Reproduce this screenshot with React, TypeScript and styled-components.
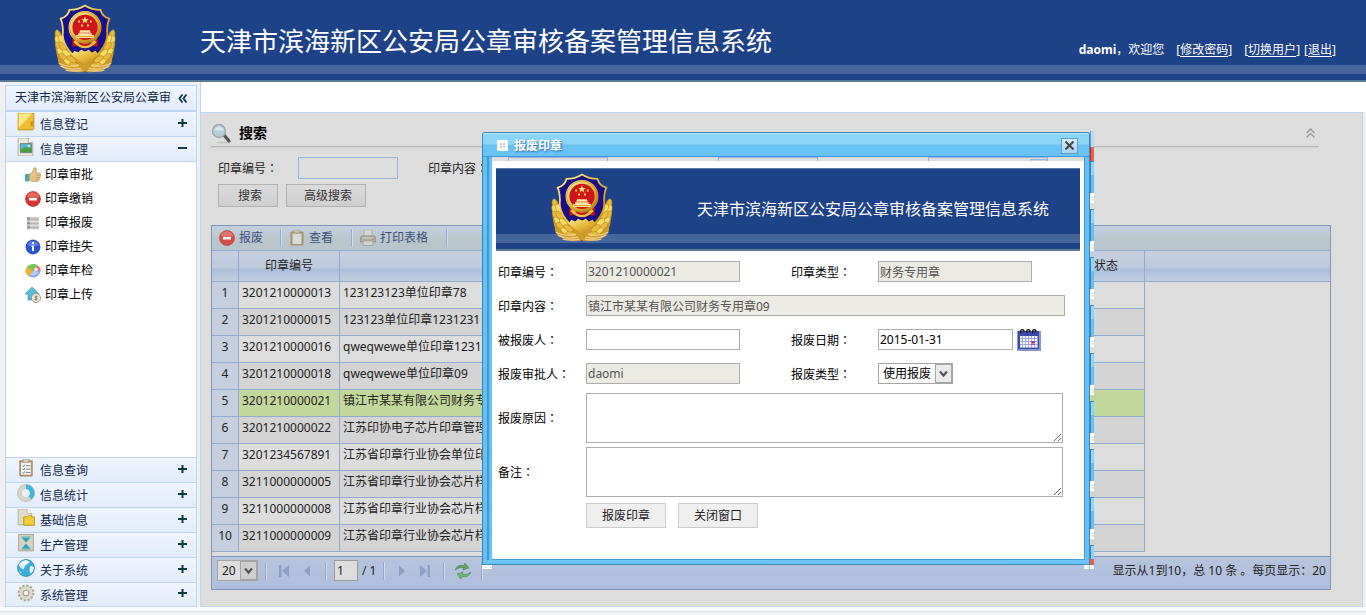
import React from "react";
import styled, { createGlobalStyle, css } from "styled-components";

const sans = `"Noto Sans", "Noto Sans CJK SC", sans-serif`;

const GlobalStyle = createGlobalStyle`
  *, *::before, *::after { box-sizing: border-box; }
  body { margin: 0; background: #f0f0f0; color: #000; font: 12px/20px ${sans}; }
  button, input, select, textarea { font: 12px/16px ${sans}; margin: 0; border-radius: 0; }
  svg { display: block; flex: none; }
`;

/* ---------- page frame ---------- */

const Page = styled.div`
  display: flex;
  flex-direction: column;
  min-height: 100vh;
`;

const brandBackground = css`
  background: linear-gradient(#1d4287 0 65px, #46659d 65px 74px, #1d4287 74px 80px, #597a94 80px 82px);
`;

const Header = styled.header`
  ${brandBackground}
  display: flex;
  height: 82px;
  padding: 4px 30px 0 53px;
  color: #fff;
`;

const SiteTitle = styled.h1`
  flex: 1;
  margin: 20px 0 0 83px;
  font-size: 26px;
  line-height: 34px;
  font-weight: 400;
  white-space: nowrap;
`;

const UserBar = styled.nav`
  display: flex;
  margin-top: 36px;
  line-height: 20px;
  white-space: nowrap;

  a { color: #fff; text-decoration: none; margin-left: 12px; }
  a:last-child { margin-left: 4px; }
  u { text-underline-offset: 2px; }
`;

const Body = styled.div`
  flex: 1;
  display: flex;
`;

const Footer = styled.footer`
  height: 8px;
  background: linear-gradient(#fff 0 4px, #dcdde0 4px 5px, #f2f3f6 5px);
`;

/* ---------- sidebar ---------- */

const Sidebar = styled.aside`
  display: flex;
  flex-direction: column;
  width: 192px;
  margin: 3px 3px 0 5px;
  border: 1px solid #bcd5f5;
  background: #fff;
`;

const SidebarTitle = styled.div`
  display: flex;
  align-items: center;
  justify-content: space-between;
  height: 26px;
  padding: 0 8px 0 9px;
  border-bottom: 2px solid #bcd5f5;
  background: linear-gradient(#f0f5fe, #e2ecfb);
  color: #12294f;
  white-space: nowrap;
`;

const Section = styled.button<{ $first?: boolean }>`
  display: flex;
  align-items: center;
  flex: none;
  width: 100%;
  height: ${p => (p.$first ? 24 : 25)}px;
  padding: 0 9px 0 11px;
  border: 0;
  border-top: ${p => (p.$first ? 0 : 1)}px solid #bcd5f5;
  background: linear-gradient(#f0f5fe, #e2ecfb);
  color: #12294f;
  text-align: left;

  &:last-child { height: 24px; }
  svg { margin-top: -2px; }
  svg:first-child { margin-top: -4px; }
  span { flex: 1; margin: 2px 0 0 5px; }
`;

const SubMenu = styled.ul`
  flex: 1;
  margin: 0;
  padding: 0;
  list-style: none;
  border-top: 1px solid #bcd5f5;
`;

const SubItem = styled.li`
  height: 24px;
  padding-left: 19px;

  a {
    display: flex;
    align-items: center;
    gap: 4px;
    height: 24px;
    padding-top: 2px;
    color: #000;
    text-decoration: none;
  }
`;

/* ---------- main area ---------- */

const Main = styled.main`
  flex: 1;
  display: flex;
  flex-direction: column;
  min-width: 0;
  border-left: 1px solid #bcd5f5;
`;

const TabStrip = styled.div`
  height: 30px;
  background: #fff;
`;

const Panel = styled.section`
  flex: 1;
  margin-right: 3px;
  padding: 9px 31px 16px 10px;
  border: solid #bcd5f5;
  border-width: 1px 1px 1px 0;
  background: #ddd;
`;

const SearchHeader = styled.div`
  display: flex;
  align-items: center;
  height: 25px;
  margin-right: 12px;
  padding: 0 3px 2px 0;
  border-bottom: 1px solid #b9b9b9;
  box-shadow: 0 1px 0 #d2d2d2;

  h2 { flex: 1; margin: 0 0 0 7px; font-size: 14px; line-height: 20px; }
`;

const SearchFields = styled.form`
  margin: 10px 0 0 7px;
`;

const SearchGrid = styled.div`
  display: grid;
  grid-template-columns: repeat(3, 80px 130px) 80px 120px;
  align-items: center;
  color: #222;
`;

const SearchInput = styled.input`
  width: 100px;
  height: 22px;
  border: 1px solid #9db3d8;
  background: #ddd;
`;

const SearchActions = styled.div`
  display: flex;
  gap: 8px;
  margin-top: 5px;
`;

const DimButton = styled.button<{ $w: number }>`
  width: ${p => p.$w}px;
  height: 23px;
  padding: 0 0 0 4px;
  border: 1px solid #b3b3b3;
  background: linear-gradient(#dadada, #cfcfcf);
  color: #333;
`;

/* ---------- data grid ---------- */

const Grid = styled.div`
  margin-top: 18px;
  border: 1px solid #7d96ba;
`;

const Toolbar = styled.div`
  display: flex;
  align-items: center;
  height: 25px;
  padding-left: 7px;
  border-bottom: 1px solid #93aacf;
  background: linear-gradient(#c4cfdf, #b9c6cb 60%, #bac5ce);
`;

const Tool = styled.button<{ $w: number }>`
  display: flex;
  align-items: center;
  gap: 4px;
  width: ${p => p.$w}px;
  height: 18px;
  margin-right: 8px;
  padding: 0;
  border: 0;
  border-right: 1px solid #86aee0;
  box-shadow: 1px 0 0 #d5dbe5;
  background: transparent;
  color: #3a5180;
  white-space: nowrap;

  svg { opacity: 0.85; }
`;

const Table = styled.table`
  width: 100%;
  table-layout: fixed;
  border-collapse: separate;
  border-spacing: 0;
`;

const Th = styled.th`
  height: 31px;
  padding: 0;
  border: solid #93aacf;
  border-width: 0 1px 1px 0;
  background: linear-gradient(#c6cfdf, #bccadd 55%, #aabfd9 62%, #c2cddf);
  color: #222;
  font-weight: 400;

  &:last-child { border-right: 0; }
`;

const Row = styled.tr<{ $tone: string }>`
  td { background: ${p => p.$tone}; }
  td:first-child { background: #c5cfe0; text-align: center; padding: 0 0 4px; }
  td:last-child { background: transparent; border: 0; }
`;

const Td = styled.td`
  height: 27px;
  padding: 0 3px 4px;
  border: solid #93aacf;
  border-width: 0 1px 1px 0;
  line-height: 20px;
  color: #222;
  overflow: hidden;
  white-space: nowrap;
`;

const Pager = styled.div`
  display: flex;
  align-items: center;
  height: 33px;
  margin-top: 4px;
  padding: 0 4px 5px 5px;
  border-top: 1px solid #7d96ba;
  background: linear-gradient(#b6c4dd, #aebfdd);
  color: #222;
`;

const Separator = styled.span`
  width: 2px;
  height: 18px;
  margin: 0 7px;
  border-left: 1px solid #93aacf;
  border-right: 1px solid #d3d9e4;
`;

const PagerButton = styled.button`
  display: flex;
  justify-content: center;
  align-items: center;
  width: 22px;
  height: 20px;
  padding: 0;
  border: 0;
  background: transparent;
`;

const PageInput = styled.input`
  width: 24px;
  height: 21px;
  margin-right: 4px;
  padding: 0 2px;
  border: 1px solid #9a9a9a;
  background: #ddd;
  color: #222;
`;

const PagerInfo = styled.span`
  margin-left: auto;
`;

const SelectBox = styled.span<{ $w: number; $dim?: boolean }>`
  display: flex;
  width: ${p => p.$w}px;
  height: 21px;
  border: 1px solid #a5a5a5;
  background: ${p => (p.$dim ? "#ddd" : "#fff")};

  select {
    flex: 1;
    width: 100%;
    margin-right: -17px;
    padding: 0 17px 0 4px;
    border: 0;
    background: transparent;
    color: inherit;
    appearance: none;
  }
  svg {
    width: 17px;
    height: 19px;
    border: 1px solid #a5a5a5;
    background: ${p => (p.$dim ? "#cfcfcf" : "#ebebeb")};
    pointer-events: none;
  }
`;

const QuerySelect = styled(SelectBox)`
  height: 22px;
  border-color: #9db3d8;

  svg { margin-top: 1px; border-color: #9db3d8; background: #c9d3e2; }
`;

/* ---------- dialog ---------- */

const Dialog = styled.div`
  position: absolute;
  left: 482px;
  top: 132px;
  width: 608px;
  border: 1px solid #3c87b5;
  border-bottom-color: #3f88b4;
  border-radius: 3px 3px 0 0;
`;

const DialogTitle = styled.div`
  display: flex;
  align-items: center;
  height: 24px;
  padding: 2px 11px 0 14px;
  border-bottom: 1px solid #3d9bdc;
  border-radius: 2px 2px 0 0;
  background: linear-gradient(#b7e7fb 0 1px, #8ad5f8 1px 11px, #69c2f4 12px);
  color: #fff;

  h2 {
    flex: 1;
    margin: 0 0 0 6px;
    font-size: 12px;
    line-height: 20px;
    text-shadow: 1px 1px 2px #2d6d9c;
  }
`;

const CloseButton = styled.button`
  display: flex;
  align-items: center;
  justify-content: center;
  width: 17px;
  height: 16px;
  padding: 0;
  border: 1px solid #5f9ed0;
  background: linear-gradient(#d9ecfa, #a9d0f0);
`;

const DialogFrame = styled.div`
  display: flex;
  border-bottom: 4px solid #6ac4f5;
  box-shadow: inset 0 -1px 0 #3c9bdc;
`;

const LeftEdge = styled.div`
  width: 9px;
  background: linear-gradient(90deg, #65c1f5 0 4px, #3f97d8 4px 6px, #65c1f5 6px 9px);
`;

const RightEdge = styled.div`
  width: 5px;
  border-left: 1px solid #3f97d8;
  background: #65c1f5;
`;

const DialogBody = styled.div`
  flex: 1;
  min-width: 0;
  margin: 4px 0 1px;
  padding: 7px 4px 31px;
  background: #fff;
`;

const Banner = styled.div`
  display: flex;
  height: 83px;
  padding: 5px 30px 0 54px;
  color: #fff;
  background: linear-gradient(#5d7fa6 0 1px, #1d4287 1px 66px, #46659d 66px 75px, #1d4287 75px 81px, #597a94 81px);

  p {
    margin: 26px 0 0 83px;
    font-size: 16px;
    line-height: 20px;
    white-space: nowrap;
  }
`;

const Form = styled.form`
  display: flex;
  flex-direction: column;
  gap: 4px;
  padding: 10px 2px 0;
`;

const FieldGrid = styled.div`
  display: grid;
  grid-template-columns: 88px 205px 87px 1fr;
  grid-auto-rows: 21px;
  row-gap: 13px;
  align-items: center;
  margin-bottom: 5px;
`;

const Label = styled.label`
  font-family: "Noto Sans CJK TC", sans-serif;
  white-space: nowrap;
`;

const field = css`
  border: 1px solid #abadb3;
  background: #fff;
  color: #000;
  &:disabled { border-color: #acacac; background: #ebebe4; color: #545454; opacity: 1; }
`;

const TextInput = styled.input<{ $w?: number }>`
  ${field}
  width: ${p => p.$w ?? 154}px;
  height: 21px;
  padding: 0 1px;
`;

const WideCell = styled.div`
  grid-column: span 3;
  display: flex;
`;

const DateCell = styled.div`
  display: flex;
  align-items: center;
  gap: 4px;
`;

const AreaRow = styled.div`
  display: flex;
  align-items: center;

  label { width: 88px; }
`;

const TextArea = styled.textarea`
  ${field}
  width: 477px;
  height: 50px;
  padding: 2px;
`;

const Actions = styled.div`
  display: flex;
  gap: 12px;
  margin: 2px 0 0 88px;
`;

const ActionButton = styled.button`
  width: 80px;
  height: 25px;
  padding: 0;
  border: 1px solid #ccc;
  background: #efefef;
  color: #222;
`;

/* Sprite tiles that repeat along the right side and under the dialog. */
const ShadowStrip = styled.div`
  position: absolute;
  left: 1090px;
  top: 131px;
  width: 4px;
  height: 438px;
  overflow: hidden;
`;

const ShadowFoot = styled.div<{ $x: number; $w: number }>`
  position: absolute;
  left: ${p => p.$x}px;
  top: 565px;
  width: ${p => p.$w}px;
  height: 4px;
  background: repeating-linear-gradient(90deg, transparent 0 3px, #d5d8da 3px 5px) 0 2px / 100% 1px no-repeat, #fff;
`;

/* ---------- drawings ---------- */

const LEAVES = [
  [4, 31, 78], [4, 37, 70], [5, 43, 62], [7, 49, 52], [10, 54, 42],
  [15, 59, 30], [21, 62, 18], [8, 36, 62], [9, 43, 55], [13, 50, 45], [18, 56, 34],
];

function Emblem() {
  const id = React.useId();
  return (
    <svg width="64" height="70" viewBox="-1 0 66 70" aria-hidden="true">
      <defs>
        <linearGradient id={id} x1="0" y1="0" x2="1" y2="1">
          <stop offset="0" stopColor="#fff0a0" />
          <stop offset=".5" stopColor="#e8b93a" />
          <stop offset="1" stopColor="#b87d16" />
        </linearGradient>
      </defs>
      <path d="M4 56 Q14 53 32 58 Q50 53 60 56 Q60 65 46 68 Q36 70.500 32 68 Q28 70.500 18 68 Q4 65 4 56Z" fill="#cf9a3c" />
      {[false, true].map(flip => (
        <g key={String(flip)} transform={flip ? "translate(64 0) scale(-1 1)" : undefined}>
          <path d="M6 27 L2 30 L1 40 L3 52 L6 62 L32 67 L30 56 L12 40Z" fill="#cc9b28" />
          {LEAVES.map(([x, y, r], i) => (
            <ellipse key={i} cx={x} cy={y} rx="5.500" ry="2.700" fill={i % 2 ? "#f8dc62" : "#e9bb3c"} stroke="#b07d1c" strokeWidth=".5" transform={`rotate(${r} ${x} ${y})`} />
          ))}
          <path d="M5 60 Q14 65 26 62 M7 63 Q16 68 28 65 M12 67 Q20 69 29 67" stroke="#f3cf84" strokeWidth="1.300" fill="none" />
        </g>
      ))}
      <path d="M32 .5 Q39 5 48 5 Q50 12 57 14 Q54 22 55 31 Q54 47 32 61 Q10 47 9 31 Q10 22 7 14 Q14 12 16 5 Q25 5 32 .5Z" fill="#1a0f86" stroke={`url(#${id})`} strokeWidth="1.800" />
      <path d="M15 48 L19 50 L21 47 L25 49 L28 46 L32 48 L36 46 L39 49 L43 47 L45 50 L49 48 Q42 56 32 61 Q22 56 15 48Z" fill={`url(#${id})`} />
      <path d="M19 35 L19 43 L25 42 L32 44 L39 42 L45 43 L45 35Z" fill="#c9131b" />
      <path d="M21 37 Q32 49 43 37" fill="none" stroke="#efc23e" strokeWidth="3" />
      <circle cx="32" cy="23" r="15" fill="#d0141b" stroke={`url(#${id})`} strokeWidth="4" />
      <circle cx="32" cy="23" r="16" fill="none" stroke="#a8751a" strokeWidth=".5" />
      <path d="M32 11.500 L33 14.400 H36 L33.600 16.200 L34.500 19 L32 17.300 L29.500 19 L30.400 16.200 L28 14.400 H31Z" fill="#ffe67a" />
      <path d="M25 16h2v2h-2zM37 16h2v2h-2zM28 20h2v2h-2zM34 20h2v2h-2z" fill="#ffd95c" />
      <path d="M27 26 H37 L38 28.500 H26Z M25 29 H39 V31 H41 V34 H23 V31 H25Z" fill="#f8e8a2" />
      <path d="M24 32.500 H40" stroke="#d59922" />
      <path d="M26 39 Q32 44 38 39" fill="none" stroke="#c9131b" strokeWidth="1.600" />
    </svg>
  );
}

type Art = { size?: number; children: React.ReactNode };
const Draw = ({ size = 16, children }: Art) => (
  <svg width={size} height={size} viewBox="0 0 16 16" aria-hidden="true">{children}</svg>
);

const icons: Record<string, React.ReactNode> = {
  book: <><path d="M1 0h14v14l-1 1H1z" fill="#efbe31" stroke="#b98712" strokeWidth=".7" /><path d="M1.500 .5h12L1.500 13z" fill="#ffe985" /><path d="M12 8l2-1v5l-2-1z" fill="#c98b0a" /></>,
  picture: <><path d="M1 0h9l4 4v12H1z" fill="#eceadd" stroke="#a9a590" strokeWidth=".7" /><path d="M10 0v4h4" fill="#fff" stroke="#a9a590" strokeWidth=".7" /><path d="M3 5h10v8H3z" fill="#55b8e3" stroke="#657c60" strokeWidth=".8" /><path d="M3.500 10l4-2 5 1v3.500h-9z" fill="#48a33b" /><circle cx="10.500" cy="7" r="1" fill="#fff2a0" /></>,
  checklist: <><rect x="2" y="1" width="12" height="14.500" rx="1" fill="#a98a62" /><path d="M3.500 3h9v11h-9z" fill="#f2f4f5" /><path d="M5.500 0h5v3h-5z" fill="#d5d0bd" stroke="#958a70" strokeWidth=".5" /><path d="M5 6l.8.8L7 5M5 9l.8.8L7 8M5 12l.8.8L7 11" fill="none" stroke="#278594" strokeWidth=".8" /><path d="M8 6h4M8 9h4M8 12h4" stroke="#777" strokeWidth=".8" /></>,
  donut: <><circle cx="8" cy="8" r="5.500" fill="none" stroke="#d8d5c6" strokeWidth="4" /><path d="M8 2.500a5.500 5.500 0 0 1 3.500 9.800" fill="none" stroke="#3cb7dd" strokeWidth="4" /><circle cx="8" cy="8" r="7.600" fill="none" stroke="#a2abab" strokeWidth=".5" /></>,
  folder: <><path d="M1 0h8l4 4v10H1z" fill="#dfdccb" stroke="#a9a48c" strokeWidth=".7" /><path d="M9 0v4h4" fill="#fff" stroke="#a9a48c" strokeWidth=".6" /><path d="M6 7h3l1-1h3v1h2.500v7.500H6z" fill="#f1ce32" stroke="#b48b12" strokeWidth=".7" /></>,
  hourglass: <><rect x="1.500" y=".5" width="13" height="14.500" fill="#d5d2c1" stroke="#9a967e" strokeWidth=".7" /><path d="M4 3h8L8 7.500zM4 13h8L8 8.500z" fill="#2aa7bf" /><path d="M4 2.500h8M4 13.500h8" stroke="#7db9bd" /></>,
  globe: <><circle cx="8" cy="8" r="7.500" fill="#3aaed4" stroke="#20799c" strokeWidth=".6" /><path d="M1.500 5Q4 1 9 1q2 1 1 3L7 6 6 9 3 8zM12 6l3 1q0 4-3 6l-1-3zM2 10l2 2-.5 1z" fill="#e4f4f8" /><path d="M3 3q5-4 9 0-4 1-9 0" fill="#fff" opacity=".5" /></>,
  gear: <><circle cx="8" cy="8" r="6.500" fill="#d9d6c7" stroke="#aaa691" strokeWidth="2" strokeDasharray="2 1.400" /><circle cx="8" cy="8" r="5.700" fill="#dedbce" /><circle cx="8" cy="8" r="2.500" fill="#f5f4ee" stroke="#a5a18d" /></>,
  thumb: <><path d="M0 7h4v7.500H0z" fill="#46a9ba" /><path d="M4 7l3-1L9 .8q3-.8 2.300 2.700L11 6h3.500q1.600.7.8 2.300.8 1.200-.3 2.400.4 1.300-.8 2Q14 14.500 12 14.500H8L4 13z" fill="#e5c284" stroke="#ac8344" strokeWidth=".6" /><path d="M11 8.300h4M11 10.600h4M10.500 12.700H14" stroke="#b88f4e" strokeWidth=".6" /></>,
  stop: <><circle cx="8" cy="8" r="7.500" fill="#d8372f" stroke="#a92620" strokeWidth=".6" /><path d="M1.500 6a6.800 6.800 0 0 1 13 0q-6 2-13 0" fill="#ee7a6e" opacity=".7" /><path d="M4 7h8v2.500H4z" fill="#fff" /></>,
  server: <><path d="M2 2h12v12.500H2z" fill="#c9c9c9" /><path d="M2 2h3v12.500H2z" fill="#9c9c9c" /><path d="M2 6h12M2 10h12M2 14h12" stroke="#fff" /><path d="M2 5h12M2 9h12M2 13h12" stroke="#8a8a8a" strokeWidth=".6" /></>,
  info: <><circle cx="8" cy="8" r="7" fill="#2b55d1" stroke="#1d3d9c" strokeWidth=".8" /><path d="M2 6q6-8 12 0-6 2-12 0" fill="#6d93f1" opacity=".7" /><path d="M7 3h2v2H7zM6.500 6.500H9V12H7V8h-.5z" fill="#fff" /></>,
  pie: <><ellipse cx="8" cy="8" rx="7.500" ry="6.500" fill="#8ea4ec" /><path d="M8 8L2 3.500q3-3 8-2.500l3 2z" fill="#6fcb46" /><path d="M8 8L2 4q-4 5 2 9.500z" fill="#eab334" /><path d="M8 8l4-5.500q4 2 3.500 5z" fill="#ec6b79" /><circle cx="11" cy="6.500" r="2" fill="#f9dfe2" /><path d="M5 12l3-4 6 1q-3 5-9 3z" fill="#bac9f6" /></>,
  upload: <><path d="M7 0L0 7h3v6h8V7h3z" fill="#55bfd8" stroke="#2a8ea9" strokeWidth=".6" /><circle cx="11" cy="11" r="4.600" fill="#e7e4d4" stroke="#948f78" strokeWidth=".8" /><path d="M12.500 9.500h-2q-1.500 1 .5 1.500t.5 1.500h-2M11 8.500v5" fill="none" stroke="#777262" strokeWidth=".8" /></>,
  clipboard: <><rect x="1.500" y="1.500" width="13" height="14" rx="1" fill="#a58a5c" /><path d="M3.500 3.500h9v10.500h-9z" fill="#dfe1df" /><path d="M5 0h6v3H5z" fill="#c8c2aa" stroke="#897e63" strokeWidth=".5" /></>,
  printer: <><path d="M4 0h8v6H4z" fill="#dadad5" stroke="#939388" strokeWidth=".6" /><path d="M1 6h14l1 6H0z" fill="#aaa99b" stroke="#7e7c6e" strokeWidth=".6" /><path d="M2 8h12" stroke="#dedace" /><path d="M3 11h10v4.500H3z" fill="#d8d9d6" stroke="#8b8b82" strokeWidth=".6" /><path d="M12 9h2" stroke="#d35750" /></>,
  first: <><path d="M2 2h2.500v12H2z" fill="#8ea0c4" /><path d="M12 2v12L5 8z" fill="#8ea0c4" /></>,
  prev: <path d="M11 2.500v11L5 8z" fill="#8ea0c4" />,
  next: <path d="M4 2.500v11L10 8z" fill="#8ea0c4" />,
  last: <><path d="M10.500 2H13v12h-2.500z" fill="#8ea0c4" /><path d="M3 2v12l7-6z" fill="#8ea0c4" /></>,
  refresh: <><path d="M0 7q2-6 9-4.500L10 0l4 5-6 2 .5-2.500Q4 4 0 7z" fill="#5fa265" stroke="#3c7e49" strokeWidth=".5" /><path d="M16 9q-2 6-9 4.500L6 16l-4-5 6-2-.5 2.500Q12 12 16 9z" fill="#78b373" stroke="#3c7e49" strokeWidth=".5" /></>,
};

const Icon = ({ name, size }: { name: string; size?: number }) => <Draw size={size}>{icons[name]}</Draw>;

const Toggle = ({ open }: { open?: boolean }) => (
  <svg width="9" height="9" viewBox="0 0 9 9" aria-hidden="true">
    <path d={open ? "M0 3h9v2H0z" : "M0 3h3.500V0h2v3H9v2H5.500v3h-2V5H0z"} fill="#0e3a48" />
  </svg>
);

const Chevron = () => (
  <svg viewBox="0 0 15 17" aria-hidden="true"><path d="M4 6.500l3.500 4 3.500-4" fill="none" stroke="#555" strokeWidth="2.200" /></svg>
);

const Calendar = () => (
  <svg width="24" height="22" viewBox="0 0 24 22" role="img" aria-label="选择日期">
    <path d="M0 2h24v20H0z" fill="#8798cb" />
    <path d="M1 2h21v18H1z" fill="#3a4aa5" />
    <path d="M3 7h18v12H3z" fill="#9aa6dc" />
    {[0, 1, 2, 3].map(r => [0, 1, 2, 3, 4, 5].map(c => (
      <path key={`${r}${c}`} d={`M${3 + c * 3} ${7 + r * 3}h2v2h-2z`} fill="#fff" />
    )))}
    <path d="M14.500 12.500l3 3M17.500 12.500l-3 3" stroke="#d2004a" strokeWidth="1.400" />
    {[5, 11, 17].map(x => <path key={x} d={`M${x - 1} 4q-1-3 1-3.300 3 0 1.500 2.300`} fill="none" stroke="#111" strokeWidth="1.300" />)}
  </svg>
);

/* ---------- data ---------- */

const subItems = [
  ["thumb", "印章审批"], ["stop", "印章缴销"], ["server", "印章报废"],
  ["info", "印章挂失"], ["pie", "印章年检"], ["upload", "印章上传"],
];

const lowerSections = [
  ["checklist", "信息查询"], ["donut", "信息统计"], ["folder", "基础信息"],
  ["hourglass", "生产管理"], ["globe", "关于系统"], ["gear", "系统管理"],
];

const rows = [
  ["3201210000013", "123123123单位印章78"],
  ["3201210000015", "123123单位印章1231231"],
  ["3201210000016", "qweqwewe单位印章1231"],
  ["3201210000018", "qweqwewe单位印章09"],
  ["3201210000021", "镇江市某某有限公司财务专"],
  ["3201210000022", "江苏印协电子芯片印章管理"],
  ["3201234567891", "江苏省印章行业协会单位印"],
  ["3211000000005", "江苏省印章行业协会芯片样"],
  ["3211000000008", "江苏省印章行业协会芯片样"],
  ["3211000000009", "江苏省印章行业协会芯片样"],
];

const SYSTEM_NAME = "天津市滨海新区公安局公章审核备案管理信息系统";
const SELECTED = 4;

const rowTone = (i: number) => (i === SELECTED ? "#c2d79b" : i % 2 ? "#d4d4d4" : "#ddd");

/* ---------- components ---------- */

function SideNav() {
  return (
    <Sidebar>
      <SidebarTitle>
        天津市滨海新区公安局公章审
        <svg width="10" height="9" viewBox="0 0 10 9" aria-hidden="true">
          <path d="M4.500 .5L1.500 4.500l3 4M8.500 .5l-3 4 3 4" fill="none" stroke="#0e3a48" strokeWidth="1.800" />
        </svg>
      </SidebarTitle>
      <Section $first><Icon name="book" size={18} /><span>信息登记</span><Toggle /></Section>
      <Section><Icon name="picture" size={18} /><span>信息管理</span><Toggle open /></Section>
      <SubMenu>
        {subItems.map(([icon, text]) => (
          <SubItem key={text}><a href="#"><Icon name={icon} />{text}</a></SubItem>
        ))}
      </SubMenu>
      {lowerSections.map(([icon, text]) => (
        <Section key={text}><Icon name={icon} size={18} /><span>{text}</span><Toggle /></Section>
      ))}
    </Sidebar>
  );
}

function SearchArea() {
  return (
    <>
      <SearchHeader>
        <svg width="21" height="21" viewBox="0 0 21 21" aria-hidden="true">
          <ellipse cx="12" cy="19.500" rx="7" ry="1" fill="#c8c8c8" />
          <path d="M13 12l5 6" stroke="#555" strokeWidth="3.200" strokeLinecap="round" />
          <circle cx="8" cy="8" r="6.500" fill="#b4cdd9" stroke="#a2a8ab" strokeWidth="1.400" />
          <path d="M3 7q5-7 10 0-5 1-10 0" fill="#dae7ee" />
        </svg>
        <h2>搜索</h2>
        <svg width="11" height="10" viewBox="0 0 11 10" aria-hidden="true">
          <path d="M1.500 5l4-4 4 4M1.500 9.500l4-4 4 4" fill="none" stroke="#999" strokeWidth="1.300" />
        </svg>
      </SearchHeader>
      <SearchFields>
        <SearchGrid>
          <Label htmlFor="q-no">印章编号：</Label><SearchInput id="q-no" />
          <Label htmlFor="q-content">印章内容：</Label><SearchInput id="q-content" />
          <span /><SearchInput aria-label="印章类型" />
          <span /><QuerySelect $w={120} $dim><select aria-label="印章状态" /><Chevron /></QuerySelect>
        </SearchGrid>
        <SearchActions>
          <DimButton type="button" $w={60}>搜索</DimButton>
          <DimButton type="button" $w={80}>高级搜索</DimButton>
        </SearchActions>
      </SearchFields>
    </>
  );
}

function SealGrid() {
  return (
    <Grid>
      <Toolbar>
        <Tool $w={62}><Icon name="stop" />报废</Tool>
        <Tool $w={63}><Icon name="clipboard" />查看</Tool>
        <Tool $w={87}><Icon name="printer" />打印表格</Tool>
      </Toolbar>
      <Table>
        <colgroup>
          <col width="27" /><col width="101" /><col width="704" /><col width="101" /><col />
        </colgroup>
        <thead>
          <tr><Th /><Th>印章编号</Th><Th /><Th>印章状态</Th><Th /></tr>
        </thead>
        <tbody>
          {rows.map(([no, content], i) => (
            <Row key={no} $tone={rowTone(i)}>
              <Td>{i + 1}</Td><Td>{no}</Td><Td>{content}</Td><Td /><Td />
            </Row>
          ))}
        </tbody>
      </Table>
      <Pager>
        <SelectBox $w={41} $dim>
          <select aria-label="每页显示" defaultValue="20"><option>20</option></select>
          <Chevron />
        </SelectBox>
        <Separator />
        <PagerButton aria-label="首页"><Icon name="first" /></PagerButton>
        <PagerButton aria-label="上一页"><Icon name="prev" /></PagerButton>
        <Separator />
        <PageInput aria-label="页码" defaultValue="1" />/ 1
        <Separator />
        <PagerButton aria-label="下一页"><Icon name="next" /></PagerButton>
        <PagerButton aria-label="末页"><Icon name="last" /></PagerButton>
        <Separator />
        <PagerButton aria-label="刷新"><Icon name="refresh" /></PagerButton>
        <Separator />
        <PagerInfo>显示从1到10，总 10 条 。每页显示：20</PagerInfo>
      </Pager>
    </Grid>
  );
}

function ScrapDialog() {
  return (
    <Dialog role="dialog" aria-labelledby="dialog-title">
      <DialogTitle>
        <svg width="11" height="11" viewBox="0 0 11 11" aria-hidden="true">
          <rect width="11" height="11" rx="1" fill="#fff" />
          <path d="M3 3h2v2H3zM6 3h2v2H6zM3 6h2v2H3zM6 6h2v2H6z" fill="#c9ced2" />
        </svg>
        <h2 id="dialog-title">报废印章</h2>
        <CloseButton aria-label="关闭">
          <svg width="9" height="9" viewBox="0 0 9 9"><path d="M.5.500l8 8M8.500.500l-8 8" stroke="#444" strokeWidth="2" /></svg>
        </CloseButton>
      </DialogTitle>
      <DialogFrame>
        <LeftEdge />
        <DialogBody>
          <Banner><Emblem /><p>{SYSTEM_NAME}</p></Banner>
          <Form>
            <FieldGrid>
              <Label htmlFor="no">印章编号：</Label>
              <TextInput id="no" disabled defaultValue="3201210000021" />
              <Label htmlFor="type">印章类型：</Label>
              <TextInput id="type" disabled defaultValue="财务专用章" />
              <Label htmlFor="content">印章内容：</Label>
              <WideCell><TextInput id="content" $w={479} disabled defaultValue="镇江市某某有限公司财务专用章09" /></WideCell>
              <Label htmlFor="person">被报废人：</Label>
              <TextInput id="person" />
              <Label htmlFor="date">报废日期：</Label>
              <DateCell><TextInput id="date" $w={135} defaultValue="2015-01-31" /><Calendar /></DateCell>
              <Label htmlFor="approver">报废审批人：</Label>
              <TextInput id="approver" disabled defaultValue="daomi" />
              <Label htmlFor="kind">报废类型：</Label>
              <SelectBox $w={75}><select id="kind"><option>使用报废</option></select><Chevron /></SelectBox>
            </FieldGrid>
            <AreaRow><Label htmlFor="reason">报废原因：</Label><TextArea id="reason" /></AreaRow>
            <AreaRow><Label htmlFor="remark">备注：</Label><TextArea id="remark" /></AreaRow>
            <Actions>
              <ActionButton type="button">报废印章</ActionButton>
              <ActionButton type="button">关闭窗口</ActionButton>
            </Actions>
          </Form>
        </DialogBody>
        <RightEdge />
      </DialogFrame>
    </Dialog>
  );
}

function DialogShadow() {
  return (
    <>
      <ShadowStrip>
        <svg width="4" height="438" aria-hidden="true">
          <rect width="4" height="16" fill="#b7dcf6" /><rect width="1" height="16" fill="#5b9bd0" />
          <rect y="16" width="4" height="14" fill="#e5604e" /><rect y="16" width="1" height="14" fill="#b03428" />
          {Array.from({ length: 9 }, (_, i) => 30 + i * 48).map(y => (
            <g key={y}>
              <rect y={y} width="4" height="32" fill="#65c1f5" />
              <rect y={y} width="4" height="14" fill="#8ad5f8" />
              <rect y={y} width="1" height="32" fill="#3c87b5" />
              <rect y={y} width="4" height="1" fill="#3c87b5" />
              <rect y={y + 32} width="4" height="10" fill="#fff" />
              <path d={`M3 ${y + 35}v2M3 ${y + 38}v2`} stroke="#c9ced2" />
            </g>
          ))}
          <rect y="428" width="4" height="6" fill="#e5604e" />
          <rect y="434" width="4" height="4" fill="#fff" />
        </svg>
      </ShadowStrip>
      <ShadowFoot $x={482} $w={10} />
      <ShadowFoot $x={1084} $w={5} />
    </>
  );
}

export default function App() {
  return (
    <Page>
      <GlobalStyle />
      <Header>
        <Emblem />
        <SiteTitle>{SYSTEM_NAME}</SiteTitle>
        <UserBar>
          <span><b>daomi</b>，欢迎您</span>
          <a href="#">[<u>修改密码</u>]</a>
          <a href="#">[<u>切换用户</u>]</a>
          <a href="#">[<u>退出</u>]</a>
        </UserBar>
      </Header>
      <Body>
        <SideNav />
        <Main>
          <TabStrip />
          <Panel>
            <SearchArea />
            <SealGrid />
          </Panel>
        </Main>
      </Body>
      <Footer />
      <ScrapDialog />
      <DialogShadow />
    </Page>
  );
}
